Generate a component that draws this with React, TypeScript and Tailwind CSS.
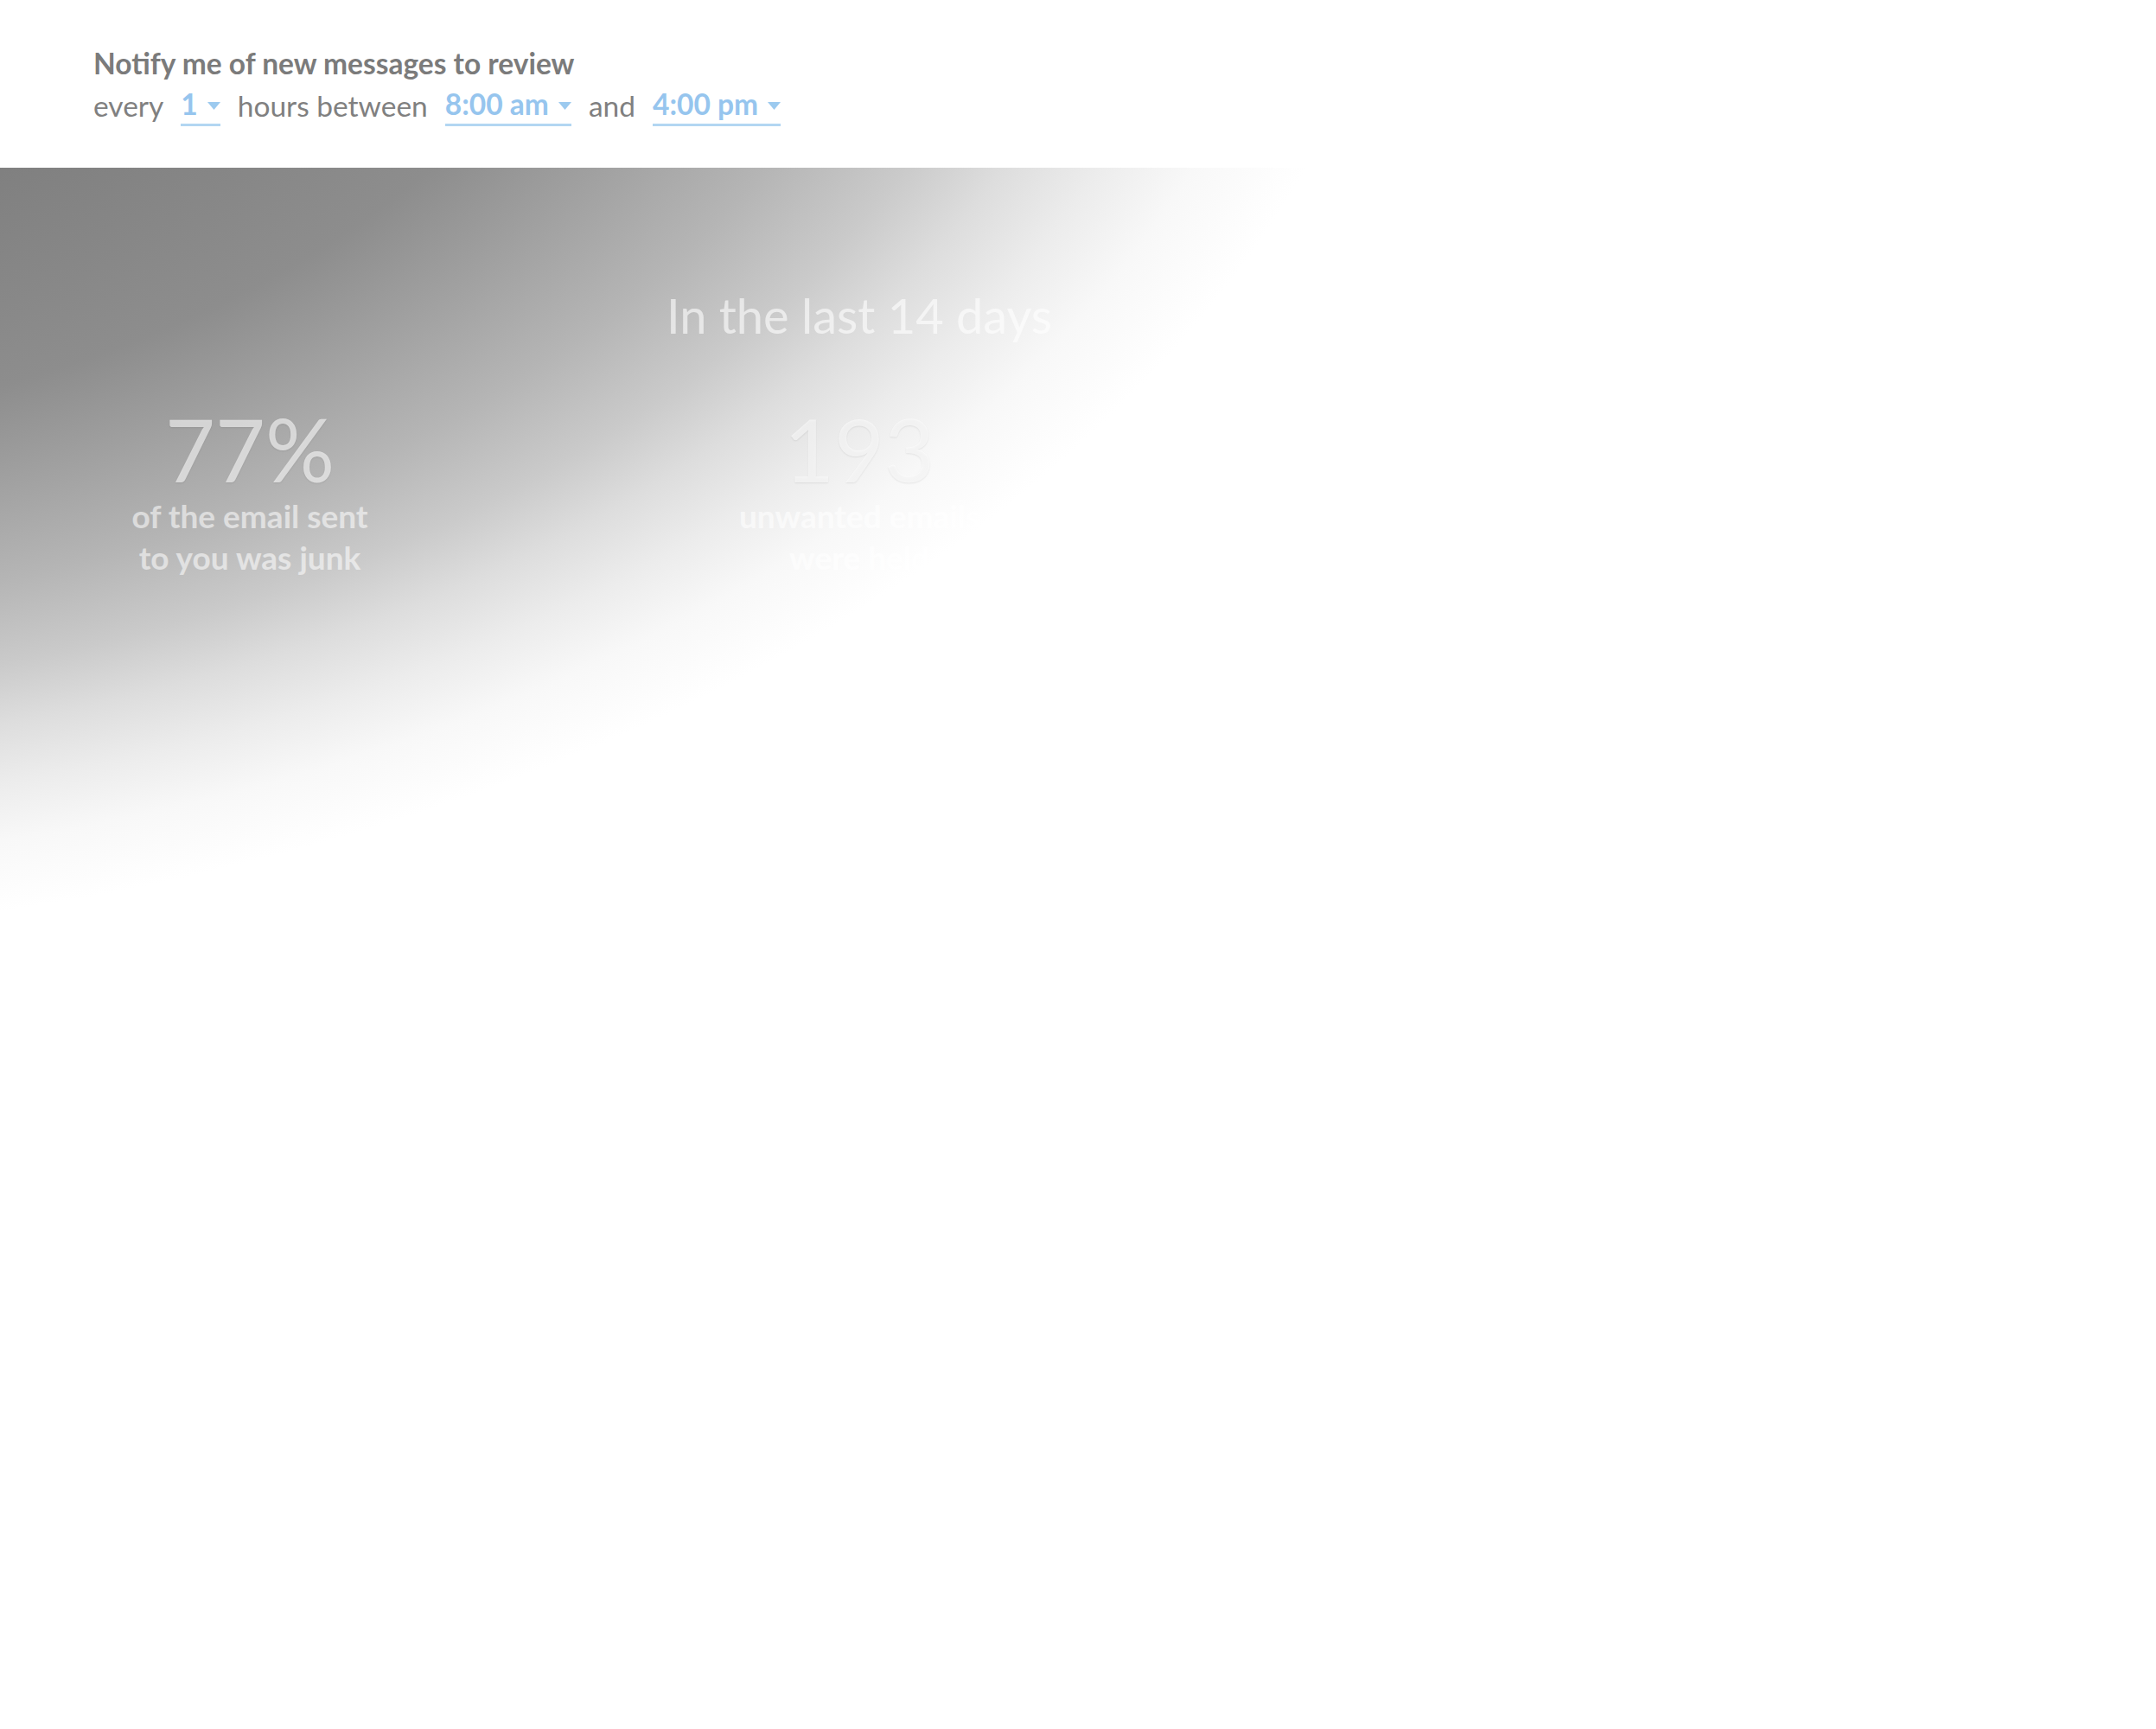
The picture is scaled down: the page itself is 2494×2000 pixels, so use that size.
import React from 'react';

function Caret() {
  return (
    <svg width="15" height="9" viewBox="0 0 15 9" className="mt-[4px]">
      <path d="M0 0 L15 0 L7.5 9 Z" fill="#9ccaef" />
    </svg>
  );
}

function Picker({ value }: { value: string }) {
  return (
    <span className="inline-flex items-center gap-[11px] border-b-[3px] border-[#b3d6f2] leading-[46px] font-bold text-[#96c5ee]">
      {value}
      <Caret />
    </span>
  );
}

function Stat({ value, lines }: { value: string; lines: string[] }) {
  return (
    <div className="flex flex-col items-center text-center">
      <div className="text-[100px] leading-[100px] text-white/60 [text-shadow:0_1px_2px_rgba(0,0,0,0.08)]">{value}</div>
      <div className="mt-[4px] text-[37px] leading-[48px] font-bold text-white/55">
        {lines.map((l) => (
          <div key={l}>{l}</div>
        ))}
      </div>
    </div>
  );
}

export default function App() {
  return (
    <div className="min-h-screen bg-white font-['Lato',sans-serif]">
      {/* notification settings */}
      <div className="h-[194px] px-[108px] pt-[49px] text-[33.5px] leading-[48px] text-[#808080]">
        <div className="font-bold text-[#7b7b7b]">Notify me of new messages to review</div>
        <div className="flex items-center gap-[20px]">
          <span>every</span>
          <Picker value="1" />
          <span>hours between</span>
          <Picker value="8:00 am" />
          <span>and</span>
          <Picker value="4:00 pm" />
        </div>
      </div>

      {/* stats banner */}
      <section className="h-[900px] bg-[radial-gradient(ellipse_2039px_1320px_at_-477px_-477px,#7e7e7e_0%,#7f7f7f_42%,#8d8d8d_60%,#b5b5b5_76%,#cacaca_83%,#dddddd_88%,#ececec_93%,#f8f8f8_98%,#ffffff_104%)] pt-[143px]">
        <div className="w-[1988px]">
          <h2 className="text-center text-[56px] leading-none font-normal text-white/60">In the last 14 days</h2>
          <div className="mt-[76px] grid grid-cols-3 gap-x-[127px]">
            <Stat value="77%" lines={['of the email sent', 'to you was junk']} />
            <Stat value="193" lines={['unwanted emails', 'were held']} />
            <div />
          </div>
        </div>
      </section>
    </div>
  );
}
